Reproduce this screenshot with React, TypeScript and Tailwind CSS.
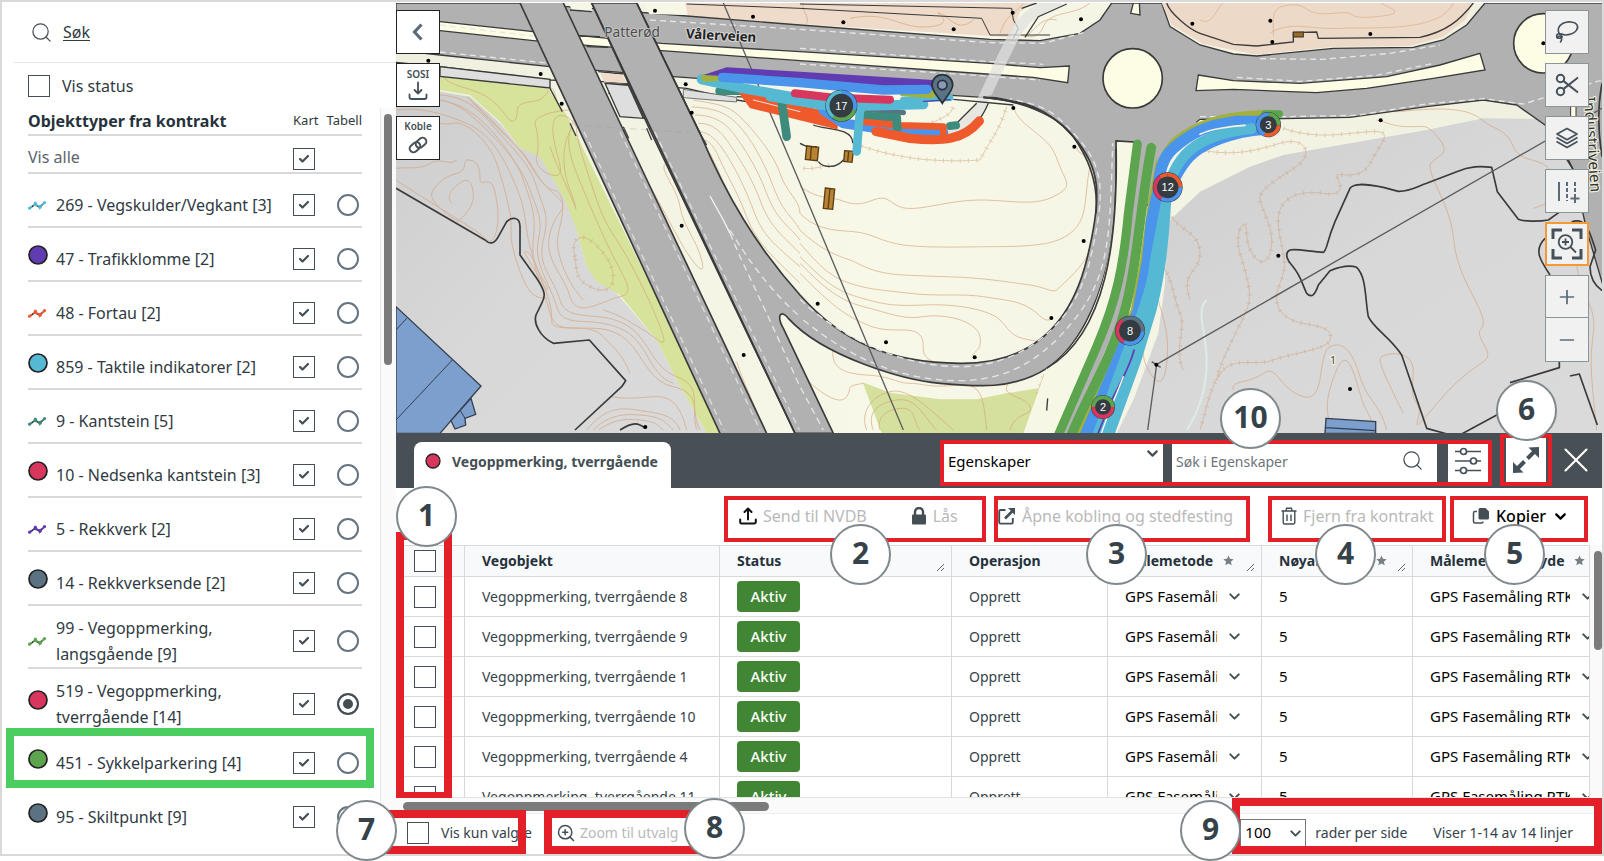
import React from "react";
import { Check, ChevronDown, Plus, Minus, X, Search, ZoomIn } from "lucide-react";

/* ---------- small controls ---------- */

function Tick({ label, checked = false }: { label: string; checked?: boolean }) {
  return (
    <span className="relative flex size-[22px] shrink-0">
      <input
        type="checkbox"
        aria-label={label}
        defaultChecked={checked}
        className="peer size-[22px] appearance-none border border-[#444f55] bg-white"
      />
      <Check
        className="pointer-events-none absolute left-[5px] top-[5px] hidden size-3 text-[#444f55] peer-checked:block"
        strokeWidth={4.4}
      />
    </span>
  );
}

function Badge({ n, className }: { n: number; className: string }) {
  return (
    <span
      className={
        "absolute z-20 flex size-[61px] items-center justify-center rounded-full border-2 border-[#7f888c] bg-white pb-[3px] text-[30px] font-bold leading-none text-[#36424a] " +
        className
      }
    >
      {n}
    </span>
  );
}

/* ---------- sidebar ---------- */

type Item = { name: string; color: string; kind: "dot" | "line"; active?: boolean; marked?: boolean };

const items: Item[] = [
  { name: "269 - Vegskulder/Vegkant [3]", color: "#55b9d3", kind: "line" },
  { name: "47 - Trafikklomme [2]", color: "#613bb2", kind: "dot" },
  { name: "48 - Fortau [2]", color: "#ee5a2c", kind: "line" },
  { name: "859 - Taktile indikatorer [2]", color: "#55b9d3", kind: "dot" },
  { name: "9 - Kantstein [5]", color: "#3d8b7d", kind: "line" },
  { name: "10 - Nedsenka kantstein [3]", color: "#d8365c", kind: "dot" },
  { name: "5 - Rekkverk [2]", color: "#613bb2", kind: "line" },
  { name: "14 - Rekkverksende [2]", color: "#5b7282", kind: "dot" },
  { name: "99 - Vegoppmerking, langsgående [9]", color: "#5da44f", kind: "line" },
  { name: "519 - Vegoppmerking, tverrgående [14]", color: "#d8365c", kind: "dot", active: true },
  { name: "451 - Sykkelparkering [4]", color: "#5da44f", kind: "dot", marked: true },
  { name: "95 - Skiltpunkt [9]", color: "#5b7282", kind: "dot" },
];

function Marker({ item }: { item: Item }) {
  if (item.kind === "dot") {
    return (
      <svg viewBox="0 0 20 20" className="mb-2 size-5" aria-hidden>
        <circle cx="10" cy="10" r="9" fill={item.color} stroke="#222" strokeWidth="1.7" />
      </svg>
    );
  }
  return (
    <svg viewBox="0 0 20 10" className="h-[10px] w-5" aria-hidden>
      <path d="M1.500 8.300 7 4.300 11.600 7.200 16.500 2.800" fill="none" stroke="#222" strokeWidth="1.5" />
      <path d="M1.500 8.300 4 6.500M7 3.500 9 5.500M13.500 5.500 16.500 2.800" fill="none" stroke={item.color} strokeWidth="1.6" />
      <g fill={item.color}>
        <circle cx="1.600" cy="8.200" r="1.600" />
        <path d="M4.800 5.700 6.500 1.500 8.500 2 10 6 7 6.300Z" />
        <path d="M9.500 5.500 13.200 4.600 14 7.500 11.500 9.700Z" />
        <circle cx="16.500" cy="2.600" r="1.600" />
      </g>
    </svg>
  );
}

function Sidebar() {
  return (
    <aside className="flex w-[394px] shrink-0 flex-col bg-white text-base text-[#2f3a42]">
      <a href="#sok" className="ml-3 flex h-[61px] shrink-0 items-center gap-[10px] border-b border-[#e3e4ea] pl-4">
        <Search className="size-[23px] text-[#444f55]" strokeWidth={1.3} />
        <span className="underline underline-offset-2">Søk</span>
      </a>
      <label className="flex h-[45px] shrink-0 items-center gap-3 pl-[26px]">
        <Tick label="Vis status" />
        Vis status
      </label>
      <div className="flex min-h-0 grow">
        <div className="relative grow overflow-hidden pl-[26px] pr-[18px]">
          <div className="flex h-7 items-center border-b-2 border-[#d9d9d9] text-[13px]">
            <h2 className="grow text-base font-bold text-[#26323b]">Objekttyper fra kontrakt</h2>
            <span className="mr-2">Kart</span>
            <span>Tabell</span>
          </div>
          <label className="flex h-[38px] items-center border-b-2 border-[#d9d9d9] pt-[10px]">
            <span className="grow pb-1 text-[#5b656c]">Vis alle</span>
            <span className="mr-[47px]">
              <Tick label="Vis alle i kart" checked />
            </span>
          </label>
          <ul>
            {items.map((item) => (
              <li
                key={item.name}
                className="relative flex min-h-[54px] items-center border-b-2 border-[#d9d9d9] pt-[9px] leading-[26px] last:border-transparent"
              >
                <span className="flex w-7 shrink-0">
                  <Marker item={item} />
                </span>
                <span className="w-[236px] shrink-0 pr-2">
                  <span className="-mr-2 block">{item.name}</span>
                </span>
                <span className="ml-px flex">
                  <Tick label={item.name + " i kart"} checked />
                </span>
                <input
                  type="radio"
                  name="tabell"
                  aria-label={item.name + " i tabell"}
                  defaultChecked={item.active}
                  className="ml-[22px] size-[22px] shrink-0 appearance-none rounded-full border-2 border-[#667380] bg-white checked:border-[#444f55] checked:bg-[#444f55] checked:shadow-[inset_0_0_0_4px_white]"
                />
                {item.marked && (
                  <span className="pointer-events-none absolute -left-[22px] -right-[12px] -top-[4px] h-[60px] border-8 border-[#4bcd5f]" />
                )}
              </li>
            ))}
          </ul>
        </div>
        <div className="w-4 shrink-0 border-l border-[#e8e8e8] bg-[#fafafa] px-[3px] pt-[6px]">
          <div className="h-[251px] w-2 rounded-full bg-[#7b7b7b]" />
        </div>
      </div>
    </aside>
  );
}

/* ---------- map ---------- */

const dots: [number, number][] = [
  [115, 182], [452, 222], [515, 311], [795, 32], [1089, 50], [887, 253], [905, 338], [875, 677], [1061, 1065], [766, 1281],
  [1360, 67], [1691, 88], [1868, 38], [2073, 58], [2407, 71], [1870, 324], [2053, 440], [2081, 723], [1984, 954], [1754, 1072],
  [1488, 1027], [1283, 911], [2641, 62], [2647, 126], [2941, 102], [2972, 361], [2665, 767], [2880, 1167], [3460, 130],
  [2299, 1094],
];

const contours = [
  "M18 305C120 285 200 300 260 350S380 480 400 540 440 640 430 720 460 860 480 940 600 960 680 1000 760 1140 850 1160 900 1240 930 1290",
  "M150 285C230 290 270 330 320 390S420 490 440 560 480 640 460 720 490 830 510 900 620 930 700 970 780 1100 860 1130 900 1210 920 1290",
  "M150 300C210 310 250 350 300 400S400 510 420 570 460 650 445 720 480 850 500 920 600 945 690 985 770 1120 850 1150",
  "M18 330C90 320 160 340 230 370S340 470 370 540 400 620 410 690 440 800 470 880 470 970 500 980 600 970 640 1010 700 1070 720 1120 670 1180",
  "M18 350C80 350 150 380 190 370S300 430 320 490 350 590 360 640 350 700 385 800 440 890 470 895",
  "M240 300C290 350 340 400 380 440S430 530 490 580 500 620 480 700 520 820 540 890 640 900 690 890 700 830 670 770 600 620 560 520 540 400 550 360",
  "M230 290C300 350 350 410 390 450S450 560 490 570 520 640 505 700 540 860 580 900",
  "M185 610C165 590 190 560 215 545S250 560 250 590 220 650 205 665C160 640 120 600 125 580S160 530 200 520 210 475 240 480 270 520 270 540 300 530 310 560 330 650 320 690 300 730 280 710 60 570 18 540",
  "M18 505C60 500 90 510 120 490S180 500 200 480",
  "M160 230C180 260 240 260 290 290S360 380 375 360 370 320 400 310 450 310 470 280 490 270 500 300",
  "M540 330C500 330 430 350 435 370S450 430 440 470 500 540 510 520 480 420 490 370 560 360 560 390 590 510 610 570 640 660 680 720 780 900 810 980 810 1020 760 990 700 950 640 930",
  "M545 385C510 440 520 520 540 570S560 640 555 620 500 500 480 440",
  "M470 870C440 820 410 770 405 760S420 750 440 800 480 860 470 870",
  "M830 490C800 500 860 560 870 620S920 720 935 780 910 790 880 740 800 590 780 560",
  "M1040 1085C1060 1150 1090 1200 1120 1290",
  "M665 1190C720 1200 760 1190 800 1190S870 1210 890 1290M590 1290C640 1230 680 1220 740 1230S850 1240 870 1290M610 1290C650 1250 690 1240 750 1245S820 1260 850 1290M625 1290C670 1260 700 1255 750 1260S800 1275 820 1290",
  "M910 300C960 310 1010 310 1050 350S1150 460 1170 520 1230 600 1230 640",
  "M905 320C960 325 1000 330 1040 370S1120 480 1150 560 1200 640 1230 690",
  "M915 345C960 345 1000 360 1030 400S1100 500 1130 580 1190 670 1230 720",
  "M925 370C960 370 985 385 1010 420S1080 520 1110 600 1170 700 1230 760",
  "M930 395C960 400 975 415 1000 450S1060 550 1090 630 1150 730 1230 800",
  "M945 420C965 430 975 445 990 480S1040 570 1070 650 1140 760 1230 850",
  "M960 460C980 500 1020 590 1050 660S1120 780 1180 830",
  "M1230 560C1290 600 1320 590 1350 600S1400 620 1450 600 1500 620 1550 625 1680 600 1770 600 1930 620 1990 590 2030 550 2010 500 1990 440 1940 400 1880 350 1870 320",
  "M1230 640C1280 690 1330 690 1390 695S1470 725 1540 735 1750 740 1800 740 1940 740 1990 725 2070 680 2080 640 2090 540 2100 500 2060 470 2060 440",
  "M1230 690C1290 750 1350 770 1380 780S1440 820 1540 825 1700 830 1760 835 1880 850 1920 855 1990 880 2000 870 2080 800 2095 760",
  "M1230 730C1290 800 1320 830 1380 850S1480 870 1560 880 1720 880 1780 890 1880 900 1920 925 1960 970 1990 955",
  "M1230 770C1290 830 1330 870 1400 890S1500 920 1600 915 1800 930 1830 960 1860 1010 1920 1020 1930 1030 1950 1035",
  "M1230 790C1290 850 1340 900 1420 920S1540 960 1600 950 1760 960 1770 1010 1730 1060 1755 1072",
  "M1230 820C1290 880 1340 930 1400 960S1480 990 1540 990 1600 1020 1600 1050 1640 1085 1650 1100",
  "M1330 1035C1320 1100 1350 1120 1430 1125S1520 1150 1560 1150 1620 1165 1700 1155 1780 1200 1790 1290M1860 1290C1880 1230 1930 1250 1920 1220S1840 1190 1850 1160 1920 1130 1960 1110",
  "M1230 1120C1290 1180 1350 1220 1370 1190S1360 1160 1420 1150M1430 1290C1410 1240 1440 1190 1500 1175S1630 1240 1690 1290M1450 1290C1430 1240 1460 1210 1520 1200S1600 1250 1640 1290M1470 1290C1460 1260 1480 1230 1530 1225S1570 1270 1590 1290",
  "M2470 310C2600 330 2780 330 3030 335 3240 310 3260 350 3290 370S3350 390 3370 440 3450 470 3480 510",
  "M2960 360C3000 370 3010 380 3060 380S3110 370 3150 420 3120 470 3120 500 3160 590 3180 660 3180 760 3250 890 3240 960 3280 1030 3270 1060 3150 1200 3110 1245 3080 1210 3085 1110 3060 1080 2970 1060 2970 1080 3010 1180 3040 1240 3060 1290",
  "M2530 1170C2520 1140 2580 1150 2620 1120S2670 1170 2740 1190 2780 1060 2820 1040 2890 1060 2910 1130 2970 1210 2990 1290M2830 1290C2800 1240 2810 1180 2840 1110S2890 1110 2910 1180 2940 1230 2950 1290",
  "M2305 900C2320 960 2340 1000 2330 1090S2290 1140 2270 1100 2260 1000 2290 960M3430 625C3450 620 3480 600 3500 620M3560 800C3580 900 3620 920 3610 1000S3600 1100 3620 1290",
  "M1240 9C1230 30 1260 45 1250 70M1380 55C1500 30 1530 90 1620 80S1620 30 1650 40 1700 100 1750 60M1830 100C1850 40 1880 40 1900 9M2000 60C1960 50 1940 80 1910 110M2100 9C2050 50 1980 30 1960 80S1900 100 1900 110",
];

const hachures = [
  "M2300 780C2350 820 2350 900 2370 940S2350 1050 2380 1110M2345 650C2370 690 2430 700 2430 760S2370 810 2400 900",
  "M2430 450C2540 470 2600 450 2670 430S2760 450 2740 480 2600 560 2610 600 2660 700 2640 760 2570 760 2570 700 2530 690 2550 760 2590 880 2570 930 2490 1080 2480 1140",
  "M2680 385C2780 420 2860 400 2940 395S2970 430 2940 490 2830 510 2840 530 2870 590 2800 580 2660 590 2665 670 2700 780 2670 850 2680 960 2740 970 2830 990 2820 1020 2700 1060 2650 1080 2540 1070 2500 1110 2450 1230 2430 1290",
  "M1390 430C1500 470 1620 490 1770 480 1800 420 1830 390 1850 320M1560 400C1600 370 1680 360 1690 320M1240 505C1280 510 1310 490 1330 500",
  "M555 770C540 720 570 700 600 720S670 790 670 830 640 880 600 860 560 820 555 770",
  "M1960 1130C1990 1120 2020 1130 2010 1150S1980 1220 1960 1230 1930 1200 1960 1130",
];

function Ring({ x, y, r, n, parts }: { x: number; y: number; r: number; n: string; parts: [string, number, number][] }) {
  const mid = r - 7;
  const round = 2 * Math.PI * mid;
  return (
    <g transform={`translate(${x} ${y})`}>
      <circle r={r} fill="#34404a" />
      {parts.map(([color, start, share]) => (
        <circle
          key={start}
          r={mid}
          fill="none"
          stroke={color}
          strokeWidth="11"
          strokeDasharray={`${round * share} ${round}`}
          transform={`rotate(${start * 360 - 90})`}
        />
      ))}
      <circle r={r - 14} fill="#343c41" />
      <text y="12" textAnchor="middle" fontSize="33" fill="#fff" fontFamily="'Liberation Sans', sans-serif">
        {n}
      </text>
    </g>
  );
}

function MapView() {
  return (
    <svg
      viewBox="18 9 3618 1290"
      preserveAspectRatio="xMinYMin slice"
      className="absolute inset-0 h-full w-full"
      fontFamily="'Noto Sans', sans-serif"
      role="img"
      aria-label="Kart"
    >
      <defs>
        <linearGradient id="ground" x1="0" y1="0" x2="1" y2="1">
          <stop offset="0" stopColor="#cdcdcd" />
          <stop offset=".5" stopColor="#d8d8d8" />
          <stop offset="1" stopColor="#dadada" />
        </linearGradient>
        <linearGradient id="field" x1="0" y1="0" x2="1" y2="0">
          <stop offset="0" stopColor="#efefdf" />
          <stop offset=".4" stopColor="#f8f8e8" />
          <stop offset="1" stopColor="#efefdf" />
        </linearGradient>
      </defs>
      <rect x="18" y="9" width="3618" height="1290" fill="url(#field)" />

      {/* ground cover */}
      <path d="M18 250 150 275 240 290 330 370 390 445 450 465 530 600 560 690 590 800 680 880 800 1020 860 1140 950 1300H18Z" fill="url(#ground)" />
      <path d="M150 228 470 262 530 345 1000 1300H950L860 1140 800 1020 690 885 620 845 590 800 560 690 520 590 450 470 390 445 330 365 240 285 150 270Z" fill="#d7e39b" />
      <path d="M2330 670 2430 575 2580 500 2680 465 2880 430 3110 390 3280 355 3440 357 3636 400V1300H2180L2230 1200 2305 1000 2325 850Z" fill="url(#ground)" />
      <path d="M1418 1147 1500 1178 1650 1198 1760 1198 1850 1180 1945 1165 1925 1300H1475Z" fill="#d5e09d" />
      <path d="M880 9H1930L1890 35 1860 112 1800 108 1230 72 890 48Z" fill="#eedbc9" />

      {/* contour lines */}
      <g fill="none" stroke="#d4a078" strokeWidth="3" opacity=".62">
        {contours.map((d) => (
          <path key={d} d={d} />
        ))}
      </g>
      <g fill="none" stroke="#cfa07a" opacity=".5">
        {hachures.map((d) => (
          <g key={d}>
            <path d={d} strokeWidth="3" />
            <path d={d} strokeWidth="13" strokeDasharray="3 22" />
          </g>
        ))}
      </g>
      <path d="M2450 900C2415 930 2450 1000 2450 1080S2430 1230 2390 1290" fill="none" stroke="#dcebea" strokeWidth="6" />

      {/* east-west road */}
      <g stroke="#3a3a3a" strokeWidth="4">
        <path d="M18 9H390L600 25 890 48 1230 75 1800 118 1950 122 2070 100 2130 60 2165 9H2315L2340 80 2430 135 2530 162 2600 168 2830 145 3070 142 3160 120 3230 75 3285 9H3640V860L3590 690 3550 510 3465 375 3380 315 3280 300 3110 320 2880 352 2680 356 2430 358 2330 440 2280 620 2180 560 2180 425 2050 360 1870 305 1780 292 1300 262 850 230 480 200 150 165 18 150Z" fill="#b1b1b1" />
        <path d="M18 60 150 65 430 95 600 110 815 130 1230 155 1800 190 1950 203 2038 198 2033 248 1930 232 1230 182 815 152 600 137 430 122 150 92 18 80Z" fill="#fdfde6" />
        <path d="M2425 225 2530 242 2730 250 2990 230 3150 195 3270 160 3285 210 3130 235 2930 265 2780 278 2530 268 2418 272Z" fill="#fdfde6" />
        <path d="M2230 9 2222 40 2250 45 2248 9Z" fill="#fdfde6" />
        <path d="M18 187 150 200 480 240 640 245 890 265 1040 300 1230 330 1230 300 1040 290" fill="none" />
        <path d="M150 200 480 238V264L150 229Z" fill="#dedede" />
        <path d="M880 268 1040 292 1040 306 880 293Z" fill="#dedede" strokeWidth="2" />
      </g>
      <path d="M2315 9 2345 75 2440 132 2600 164 2830 140 3060 138 3160 110 3225 60 3250 9Z" fill="#ecd9c8" />
      <path
        d="M2430 60C2470 80 2480 20 2500 9M2640 100C2700 60 2760 90 2850 85S3150 100 3190 9M2650 110C2650 50 2640 20 2700 15S2740 50 2830 40 2850 60 2960 50 2980 20 2975 9"
        fill="none"
        stroke="#d4a078"
        strokeWidth="3"
        opacity=".5"
      />
      <g fill="none" stroke="#3a3a3a" strokeWidth="4">
        <path d="M2330 9C2340 40 2400 90 2430 100L2530 133 2600 138 2710 126 2710 98 2780 96 2785 115 3090 112C3170 95 3210 60 3250 9" />
        <path d="M890 12 1230 25 1775 55 1800 105 1980 105M1230 12 1865 25 1870 60 1885 85 1870 115" strokeWidth="3" />
      </g>
      <rect x="2710" y="96" width="30" height="15" fill="#9b6b26" stroke="#333" strokeWidth="3" />
      <g fill="none" stroke="#e6e6e6" strokeWidth="4" strokeDasharray="18 12">
        <path d="M150 75 430 108M150 156 480 190M780 60 1230 88 1800 128 1960 130 2080 98" />
        <path d="M1230 145 1800 185 1960 193M1230 192 1700 222 1950 240M2610 176 2800 178 3000 160 3150 135M2430 350 2680 350 2900 346 3110 312 3280 296 3400 312 3636 240" />
        <path d="M2540 232 2730 244 2960 226 3130 190" />
      </g>

      {/* footpath crossing the road */}
      <path d="M2010 0C1900 40 1890 70 1840 170L1770 320C1740 370 1700 400 1650 400" fill="none" stroke="#e1e1e1" strokeWidth="34" opacity=".72" />
      <path d="M2030 12 1945 50 1905 112M1895 25 1940 9M1795 310C1770 370 1740 390 1700 400M1760 310 1700 370M1690 298 1870 315" fill="none" stroke="#3a3a3a" strokeWidth="4" />

      {/* ramp and loop */}
      <path d="M740 9 930 400C1010 590 1100 740 1230 885S1500 1088 1710 1090 2040 980 2090 780 2130 500 2050 410 1900 300 1780 292L2180 300V425H2178C2180 600 2175 700 2150 800S2070 1040 1970 1105 1760 1160 1650 1150 1300 1070 1195 955C1170 925 1160 950 1180 985L1330 1300H1215L605 9Z" fill="#b1b1b1" stroke="#3a3a3a" strokeWidth="5" />
      <path d="M1790 286 2190 286 2400 300 2420 370 2320 460 2270 600 2200 424 2140 480 1960 318Z" fill="#b1b1b1" />
      <path d="M1780 292C1880 300 2000 340 2050 410S2125 560 2118 640" fill="none" stroke="#3a3a3a" strokeWidth="5" />
      <path d="M2178 423 2250 430C2220 640 2200 860 2110 1080L2050 1240 2000 1300H1900L1970 1105C2120 1010 2190 760 2178 423Z" fill="#f7f7e6" />
      <path d="M1970 1105C2150 1000 2185 720 2178 423L2235 426" fill="none" stroke="#3a3a3a" strokeWidth="5" />
      <path d="M390 9 990 1300H1130L700 390 520 9Z" fill="#b1b1b1" />
      <path d="M540 30 605 35M570 108 630 110M590 140 655 142M625 215 700 222M650 250 715 255M655 280 720 285" stroke="#3a3a3a" strokeWidth="4" />
      <path d="M630 218 698 224 710 250 642 245Z" fill="#eedbc9" />
      <path d="M645 250 715 256 760 355 690 350Z" fill="#dedede" stroke="#3a3a3a" strokeWidth="4" />
      <path d="M535 9H600L608 32 545 28Z" fill="#f7f7e6" />
      <path d="M762 9H885L893 45 778 42Z" fill="#f7f7e6" />
      <g fill="none" stroke="#3a3a3a" strokeWidth="5">
        <path d="M390 9 570 395 990 1300M520 9 700 390 1130 1300M605 9 780 390 1215 1300M740 9 930 400" />
        <path d="M480 265 517 335M540 370 558 408M700 380 716 415M770 385 785 420M930 400 950 435" strokeWidth="4" />
      </g>
      <g fill="none" stroke="#e6e6e6" strokeWidth="4" strokeDasharray="20 14">
        <path d="M582 395 1002 1290M690 395 1110 1290M794 395 1228 1290" opacity=".85" />
        <path d="M1020 700 1050 770 1130 940 1230 1160 1300 1290M1020 690C1080 790 1150 880 1230 950" />
        <path d="M1230 898C1360 1020 1540 1100 1710 1100S2050 990 2100 780 2140 500 2060 410 1960 320 1860 296" />
        <path d="M1240 960C1400 1090 1550 1140 1700 1142S1960 1080 2060 950 2160 700 2168 430" />
        <path d="M550 375 900 398" stroke="#999" strokeWidth="2" opacity=".5" />
      </g>
      <path d="M960 588 1000 660 1020 700" fill="none" stroke="#f3f3f3" strokeWidth="4" />

      {/* roundabouts */}
      <circle cx="2228" cy="235" r="89" fill="#fdfde6" stroke="#3a3a3a" strokeWidth="5" />
      <circle cx="3460" cy="130" r="89" fill="#fdfde6" stroke="#3a3a3a" strokeWidth="5" />
      <path d="M3542 315H3558V350H3542Z" fill="#fdfde6" stroke="#3a3a3a" strokeWidth="3" />

      {/* property borders */}
      <g fill="none" stroke="#3a3a3a" strokeWidth="5" strokeLinejoin="round">
        <path d="M18 565 285 720C300 735 315 730 325 710L350 665C365 650 390 650 390 680V765L440 835C470 880 465 890 455 910L438 945C430 970 450 1010 490 1030L598 1020 707 1142 695 1160 555 1290M690 1290C730 1265 745 1268 765 1285" />
        <path d="M2700 750C2720 745 2770 757 2800 757 2812 750 2808 730 2835 665L2880 565C2890 550 2920 550 2980 562L3025 574C3060 575 3080 560 3110 550L3200 515C3240 498 3270 498 3305 502L3322 575 3385 658C3400 665 3450 665 3475 660L3510 635" />
        <path d="M2700 750C2680 760 2695 785 2705 795 2735 830 2735 850 2750 880 2765 895 2775 885 2785 855L2820 812C2850 800 2880 795 2900 802 2930 830 2925 900 2935 950 2950 985 3000 1010 3035 1065L3110 1285 3200 1310 3330 1240" />
        <path d="M3545 665C3590 650 3600 700 3617 750L3600 800C3600 840 3620 860 3636 872M3465 715C3430 750 3450 780 3480 825M3535 480 3550 510M3636 250C3620 330 3625 400 3636 470M3360 1148 3508 1103V1085M3540 1128 3568 1122 3622 1275" />
        <path d="M1230 430C1250 440 1250 440 1280 440M1270 375C1300 390 1390 380 1388 430M1285 485C1300 505 1340 505 1360 480M1973 1195 1970 1232" strokeWidth="4" />
      </g>
      <path d="M1000 9 1230 550 1540 1290M3636 325 2430 1018 2300 1093 2273 1290M2285 1085 2312 1102" fill="none" stroke="#5c5c5c" strokeWidth="4" />

      {/* buildings */}
      <g fill="#7d9fce" stroke="#34404f" strokeWidth="4">
        <path d="M18 920 273 1158 150 1300H18Z" />
        <path d="M243 1195 257 1243 225 1255 227 1275 195 1287 183 1262Z" />
        <path d="M50 955 18 990M187 1080 18 1260M210 1230 225 1255" fill="none" strokeWidth="3" />
        <path d="M2808 1255 2957 1265V1300H2805ZM2808 1283 2957 1292" />
      </g>
      <g fill="#b88434" stroke="#5c3d12" strokeWidth="4">
        <path d="M1250 438 1286 442 1282 482 1246 478ZM1264 440 1261 480" />
        <path d="M1364 452 1390 454 1386 487 1361 484ZM1376 453 1373 486" />
        <path d="M1306 564 1334 567 1328 628 1300 625ZM1320 565 1314 627" />
      </g>

      {dots.map(([x, y]) => (
        <circle key={`${x}-${y}`} cx={x} cy={y} r="6" fill="#000" />
      ))}

      {/* registered objects, lay-by */}
      <g fill="none" strokeLinecap="round" strokeLinejoin="round">
        <path d="M988 273H1060L1160 295" stroke="#3d8b7d" strokeWidth="24" />
        <path d="M1045 272 1082 322 1230 358 1340 385 1340 345 1230 318 1140 285Z" fill="#ee5a2c" stroke="#ee5a2c" strokeWidth="6" />
        <path d="M1090 300 1230 335" stroke="#f4e2da" strokeWidth="3" />
        <path d="M1175 305 1190 410" stroke="#3d8b7d" strokeWidth="26" />
        <path d="M1300 330 1360 370 1500 390 1660 398" stroke="#4b94eb" strokeWidth="30" />
        <path d="M1230 310 1540 338" stroke="#5b7282" strokeWidth="16" />
        <path d="M1420 348 1520 352 1522 382" stroke="#3d8b7d" strokeWidth="26" />
        <path d="M1680 378 1698 376" stroke="#3d8b7d" strokeWidth="24" />
        <path d="M1425 366 1530 376 1660 380 1660 398" stroke="#ee5a2c" strokeWidth="20" />
        <path d="M1520 370 1522 384" stroke="#3d8b7d" strokeWidth="26" />
        <path d="M1458 394 1560 415C1660 425 1720 420 1768 363" stroke="#ee5a2c" strokeWidth="28" />
        <path d="M935 238 1060 265 1230 295 1400 318 1600 313" stroke="#55b9d3" strokeWidth="30" />
        <path d="M1140 292 1300 318 1500 318" stroke="#55b9d3" strokeWidth="24" />
        <path d="M1410 330 1400 454" stroke="#55b9d3" strokeWidth="26" />
        <path d="M1540 300 1680 293" stroke="#55b9d3" strokeWidth="20" />
        <path d="M1600 304 1680 299" stroke="#613bb2" strokeWidth="4" />
        <path d="M945 234 1020 230M1540 278 1625 284" stroke="#a3b13a" strokeWidth="22" />
      </g>
      <path d="M940 225 1010 202 1230 215 1630 240V270L1400 262 1000 228Z" fill="#613bb2" />
      <g fill="none" strokeLinecap="round">
        <path d="M997 232 1230 248 1480 270 1612 268" stroke="#4b94eb" strokeWidth="28" />
        <path d="M1215 280 1330 293 1500 299" stroke="#d8365c" strokeWidth="24" />
      </g>

      {/* registered objects, eastern road */}
      <path d="M2300 470 2275 600 2250 780 2222 930 2155 1080 2060 1300H2100L2200 1080 2250 930 2290 780 2310 600Z" fill="#a3b13a" />
      <g fill="none" strokeLinecap="round" strokeLinejoin="round">
        <path d="M2262 435C2230 620 2220 820 2150 1000L2015 1310" stroke="#b1b1b1" strokeWidth="34" />
        <path d="M2242 432 2215 640C2200 800 2180 900 2120 1040L2003 1310" stroke="#5da44f" strokeWidth="27" />
        <path d="M2284 443C2250 620 2242 800 2202 940S2090 1190 2042 1310" stroke="#5da44f" strokeWidth="29" />
        <path d="M2645 340C2550 342 2480 352 2420 382S2335 435 2312 490" stroke="#a3b13a" strokeWidth="22" />
        <path d="M2625 342 2668 342" stroke="#5da44f" strokeWidth="22" />
        <path d="M2618 364 2540 364C2450 375 2400 400 2350 445S2310 550 2300 610" stroke="#4b94eb" strokeWidth="34" />
        <path d="M2625 388C2520 395 2440 435 2410 460S2350 540 2330 590" stroke="#4b94eb" strokeWidth="32" />
        <path d="M2585 386C2490 395 2420 425 2385 465S2330 560 2326 610" stroke="#55b9d3" strokeWidth="32" />
        <path d="M2430 403C2460 388 2520 378 2565 376" stroke="#f3f3e4" strokeWidth="5" />
      </g>
      <path d="M2300 540 2346 560C2342 640 2336 720 2328 780S2312 880 2300 930L2253 1085C2230 1150 2200 1230 2175 1300H2095L2180 1080 2235 930 2265 780Z" fill="#55b9d3" />
      <path d="M2285 580 2318 580C2305 650 2290 720 2278 790 2275 840 2250 910 2240 940L2185 1085 2108 1300H2070L2165 1080 2228 930 2256 780 2268 660Z" fill="#4b94eb" />
      <g fill="none" strokeLinecap="round">
        <path d="M2232 1050C2220 1100 2190 1150 2165 1200L2124 1300" stroke="#613bb2" strokeWidth="5" />
        <path d="M2200 1130C2180 1180 2155 1240 2134 1300" stroke="#fff" strokeWidth="4" />
      </g>

      <path d="M1657 310C1640 285 1626 272 1626 255A31 31 0 0 1 1688 255C1688 272 1672 285 1657 310Z" fill="#5b7282" stroke="#26323b" strokeWidth="5" />
      <circle cx="1657" cy="255" r="14" fill="#8b98b5" stroke="#26323b" strokeWidth="5" />

      <Ring x={1354} y={317} r={48} n="17" parts={[["#4b94eb", 0, 0.3], ["#5da44f", 0.3, 0.3], ["#55b9d3", 0.6, 0.4]]} />
      <Ring x={2333} y={562} r={45} n="12" parts={[["#ee5a2c", 0.9, 0.1], ["#ee5a2c", 0, 0.25], ["#4b94eb", 0.25, 0.33], ["#d8365c", 0.58, 0.32]]} />
      <Ring x={2220} y={992} r={45} n="8" parts={[["#5b7282", 0.9, 0.1], ["#5b7282", 0, 0.26], ["#4b94eb", 0.26, 0.32], ["#d8365c", 0.58, 0.32]]} />
      <Ring x={2139} y={1221} r={36} n="2" parts={[["#5da44f", 0.75, 0.25], ["#5da44f", 0, 0.25], ["#d8365c", 0.25, 0.5]]} />
      <Ring x={2635} y={374} r={38} n="3" parts={[["#5da44f", 0, 0.26], ["#ee5a2c", 0.26, 0.3], ["#4b94eb", 0.56, 0.44]]} />

      {/* place names */}
      <g paintOrder="stroke" strokeLinejoin="round">
        <text x="643" y="112" fontSize="41" fill="#4c4c4c" stroke="#c9c9c9" strokeWidth="5">
          Patterød
        </text>
        <text transform="translate(887 115) rotate(3)" fontSize="40" fontWeight="700" fill="#222" stroke="#d8d8d8" strokeWidth="6">
          Vålerveien
        </text>
        <text transform="translate(3582 292) rotate(86)" fontSize="46" fill="#333" stroke="#eeeedd" strokeWidth="7">
          Industriveien
        </text>
        <text x="2820" y="1092" fontSize="32" fill="#444" stroke="#f3f3dd" strokeWidth="7">
          1
        </text>
      </g>
    </svg>
  );
}

const ink = "#44505a";

function MapTools() {
  const box = "flex size-11 flex-col items-center justify-center";
  const left = box + " border border-[#222] bg-white text-[10px] font-semibold leading-none text-[#444f55]";
  const right = box + " border border-[#8a9499] bg-[#f1f1f1]";
  return (
    <div className="absolute inset-0 flex items-start justify-between py-[7px] pr-[13px]">
      <div className="flex flex-col gap-[9px]">
        <button type="button" aria-label="Skjul panel" className={left}>
          <svg viewBox="0 0 24 24" className="size-6" fill="none" stroke="#5b6b7b" strokeWidth="3.2">
            <path d="M15.500 4.500 8.500 12l7 7.500" />
          </svg>
        </button>
        <button type="button" className={left}>
          SOSI
          <svg viewBox="0 0 20 20" className="mt-0.5 size-5" fill="none" stroke={ink} strokeWidth="1.8" strokeLinecap="round" strokeLinejoin="round">
            <path d="M10 1.500v11M6.500 9 10 12.500 13.500 9M1.500 13.500v2.500a2 2 0 0 0 2 2h13a2 2 0 0 0 2-2V13.500" />
          </svg>
        </button>
        <button type="button" className={left}>
          Koble
          <svg viewBox="0 0 20 20" className="mt-1 size-5" fill="none" stroke={ink} strokeWidth="2">
            <g transform="rotate(-40 10 10)">
              <rect x="0.500" y="6" width="11.500" height="7.500" rx="3.700" />
              <rect x="8" y="6.500" width="11.500" height="7.500" rx="3.700" />
            </g>
          </svg>
        </button>
      </div>
      <div className="flex flex-col gap-[9px]">
        <button type="button" aria-label="Lasso" className={right}>
          <svg viewBox="0 0 26 26" className="size-[26px]" fill="none" stroke={ink} strokeWidth="1.6" strokeLinecap="round">
            <path d="M5.500 15C3 11.500 4 7 9 4.300c5-2.400 12-1.700 14 1.500 2 3.500-1 7.700-6 9.300-4 1.200-8 .8-10-.3" />
            <circle cx="5" cy="17" r="2.300" />
            <path d="M2.800 18.500c2-1.800 4.500-2 5.500-.500M7 18.500c1 1.500.8 3-.5 4.500" />
          </svg>
        </button>
        <button type="button" aria-label="Klipp" className={right}>
          <svg viewBox="0 0 26 26" className="size-[26px]" fill="none" stroke={ink} strokeWidth="2">
            <circle cx="6.500" cy="6.500" r="3.700" />
            <circle cx="6.500" cy="19.500" r="3.700" />
            <path d="M9.300 8.900 24 20.500M9.300 17.100 24 5.500" />
          </svg>
        </button>
        <button type="button" aria-label="Kartlag" className={right}>
          <svg viewBox="0 0 26 26" className="size-[26px]" fill="none" stroke={ink} strokeWidth="1.7" strokeLinejoin="round">
            <path d="M13 3.500 23 9l-10 5.700L3 9Z" />
            <path d="m2.500 12.500 10.500 6 10.500-6M2.500 16.500l10.500 6 10.500-6" />
          </svg>
        </button>
        <button type="button" aria-label="Legg til vei" className={right}>
          <svg viewBox="0 0 26 26" className="size-[26px]" fill="none" stroke="#5b6b7b" strokeWidth="2">
            <path d="M5 4v19" />
            <path d="M13 4v19M21 4v11" strokeDasharray="4 2" />
            <path d="M16.500 20.500h9M21 16v9" />
          </svg>
        </button>
        <button type="button" aria-label="Zoom til objekt" className="flex size-11 items-center justify-center border-2 border-[#f39a36] bg-[#f1f1f1]">
          <svg viewBox="0 0 34 34" className="size-[34px] shrink-0" fill="none" stroke={ink}>
            <path d="M3 12V3h9M22 3h9v9M31 22v9h-9M12 31H3v-9" strokeWidth="3" />
            <circle cx="15.500" cy="15" r="6.800" strokeWidth="1.8" />
            <path d="m20.500 20 5.500 5.500M15.500 11.500v7M12 15h7" strokeWidth="1.8" />
          </svg>
        </button>
        <div className="flex flex-col border border-[#8a9499] bg-[#f1f1f1]">
          <button type="button" aria-label="Zoom inn" className="flex h-[42px] w-[42px] items-center justify-center border-b border-[#8a9499]">
            <Plus className="size-[22px] text-[#5b6b7b]" strokeWidth={1.9} />
          </button>
          <button type="button" aria-label="Zoom ut" className="flex h-[43px] w-[42px] items-center justify-center">
            <Minus className="size-[22px] text-[#5b6b7b]" strokeWidth={1.9} />
          </button>
        </div>
      </div>
    </div>
  );
}

/* ---------- object panel ---------- */

function PanelBar() {
  return (
    <div className="flex h-[55px] shrink-0 items-start justify-between bg-[#484f55] pl-[18px]">
      <div className="mt-[9px] flex h-[46px] w-[257px] items-center rounded-t-lg bg-white pb-2 pl-[11px] text-[14px] font-bold text-[#444f55]">
        <svg viewBox="0 0 16 16" className="mr-[11px] size-4" aria-hidden>
          <circle cx="8" cy="8" r="7" fill="#d8365c" stroke="#222" strokeWidth="1.3" />
        </svg>
        <span className="whitespace-nowrap">Vegoppmerking, tverrgående</span>
      </div>
      <div className="mt-[7px] flex">
        <div className="relative flex h-[46px] border-4 border-[#e32027]">
          <span className="relative flex w-[219px]">
            <select aria-label="Søkefelt" className="w-full appearance-none bg-white pb-1 pl-1 text-[15px] text-black">
              <option>Egenskaper</option>
            </select>
            <ChevronDown className="pointer-events-none absolute right-[2px] top-px size-[17px] text-[#444f55]" strokeWidth={3} />
          </span>
          <span className="relative ml-[9px] flex w-[265px]">
            <input
              type="search"
              aria-label="Søk i Egenskaper"
              placeholder="Søk i Egenskaper"
              className="w-full bg-white pb-1 pl-1 text-[14px] placeholder:text-[#6d757a]"
            />
            <Search className="absolute right-[13px] top-[5px] size-[23px] text-[#444f55]" strokeWidth={1.3} />
          </span>
          <button type="button" aria-label="Filter" className="ml-[11px] flex w-10 items-center justify-center bg-white pb-1">
            <svg viewBox="0 0 28 28" className="size-7" fill="none" stroke={ink} strokeWidth="1.7">
              <path d="M1 4.500h5.500M12.500 4.500H27M1 14h15.500M22.500 14H27M1 23.500h5.500M12.500 23.500H27" />
              <circle cx="9.500" cy="4.500" r="3" />
              <circle cx="19.500" cy="14" r="3" />
              <circle cx="9.500" cy="23.500" r="3" />
            </svg>
          </button>
          <Badge n={10} className="-top-[56px] left-[276px]" />
        </div>
        <div className="relative -mt-[6px] ml-2 flex h-[52px] w-[52px] border-4 border-[#e32027]">
          <button type="button" aria-label="Utvid tabell" className="flex grow items-center justify-center border-x-2 border-[#484f55] bg-white">
            <svg viewBox="0 0 30 30" className="size-[30px] shrink-0" stroke={ink} fill={ink}>
              <path d="m16.500 13.500 8-8M13.500 16.500l-8 8" strokeWidth="4" fill="none" />
              <path d="M28 2v11L17.500 2.500ZM2 28V17l10.500 10.500Z" stroke="none" />
            </svg>
          </button>
          <Badge n={6} className="-top-[58px] -left-[8px]" />
        </div>
        <button type="button" aria-label="Lukk" className="ml-[3px] mr-[5px] flex h-11 w-[42px] items-center justify-center pb-1">
          <X className="size-[42px]" color="#fff" strokeWidth={1.2} />
        </button>
      </div>
    </div>
  );
}

function Toolbar() {
  const group = "relative flex h-[46px] items-center border-4 border-[#e32027] pb-[6px]";
  const action = "flex items-center gap-[6px] whitespace-nowrap";
  return (
    <div className="flex h-[57px] shrink-0 justify-end pr-[14px] pt-2 text-base text-[#b9b9b9]">
      <div className={group + " w-[262px] pl-[11px]"}>
        <button type="button" disabled className={action}>
          <svg viewBox="0 0 18 18" className="size-[18px]" fill="none" stroke="#111" strokeWidth="2" strokeLinecap="round" strokeLinejoin="round">
            <path d="M9 12.500V1.500M5.500 5 9 1.500 12.500 5M1.200 12.500v2.500a1.500 1.500 0 0 0 1.500 1.500h12.600a1.500 1.500 0 0 0 1.500-1.500v-2.500" />
          </svg>
          Send til NVDB
        </button>
        <button type="button" disabled className={action + " ml-11"}>
          <svg viewBox="0 0 16 18" className="h-[18px] w-4">
            <path d="M4 8V5a4 4 0 0 1 8 0v3" fill="none" stroke="#444f55" strokeWidth="2.4" />
            <rect x="1" y="7.500" width="14" height="10" rx="1" fill="#444f55" />
          </svg>
          Lås
        </button>
        <Badge n={2} className="left-[102px] top-6" />
      </div>
      <div className={group + " ml-2 w-[256px]"}>
        <button type="button" disabled className={action}>
          <svg viewBox="0 0 18 18" className="size-[18px]" fill="none" stroke="#444f55" strokeWidth="1.9">
            <path d="M7.500 3H2.500A1.300 1.300 0 0 0 1.200 4.300v11a1.300 1.300 0 0 0 1.300 1.300h11a1.300 1.300 0 0 0 1.300-1.300V11" />
            <path d="m7 11.500 8-8" strokeWidth="2.6" />
            <path d="M10 1h7v7Z" fill="#444f55" stroke="none" />
          </svg>
          Åpne kobling og stedfesting
        </button>
        <Badge n={3} className="left-[88px] top-6" />
      </div>
      <div className={group + " ml-[18px] w-[178px] pl-[9px]"}>
        <button type="button" disabled className={action}>
          <svg viewBox="0 0 16 18" className="h-[18px] w-4" fill="none" stroke="#444f55" strokeWidth="1.4">
            <path d="M.5 4h15M5 4l.5-2.800h5L11 4M2.200 4v11.500a1.500 1.500 0 0 0 1.500 1.500h8.600a1.500 1.500 0 0 0 1.500-1.500V4M6 7.500v6.500M10 7.500v6.500" />
          </svg>
          Fjern fra kontrakt
        </button>
        <Badge n={4} className="left-[43px] top-6" />
      </div>
      <div className={group + " ml-1 w-[138px] pl-[18px]"}>
        <button type="button" className={action + " font-medium text-black"}>
          <svg viewBox="0 0 18 18" className="size-[18px]">
            <path d="M5 4.500H3A1.500 1.500 0 0 0 1.500 6v8.500A1.500 1.500 0 0 0 3 16h6.500a1.500 1.500 0 0 0 1.500-1.500" fill="none" stroke="#444f55" strokeWidth="1.5" />
            <path d="M8 1h5.500l3.500 3.500V11a1.500 1.500 0 0 1-1.500 1.500H8A1.500 1.500 0 0 1 6.500 11V2.500A1.500 1.500 0 0 1 8 1Z" fill="#444f55" />
          </svg>
          Kopier
          <ChevronDown className="size-[17px]" strokeWidth={3.2} />
        </button>
        <Badge n={5} className="left-[30px] top-6" />
      </div>
    </div>
  );
}

function Star() {
  return (
    <svg viewBox="0 0 12 12" className="ml-[10px] size-[11px] shrink-0" fill="#7a7f84" aria-hidden>
      <path d="m6 .5 1.600 3.700 4 .4-3 2.700.9 4L6 9.200l-3.500 2.100.9-4-3-2.700 4-.4Z" />
    </svg>
  );
}

function Grip() {
  return (
    <svg viewBox="0 0 9 9" className="absolute bottom-1 right-[6px] size-[9px]" fill="none" stroke="#666" strokeWidth="1" aria-hidden>
      <path d="M1 8 8 1M5 8l3-3" />
    </svg>
  );
}

const columns = [
  { name: "Vegobjekt", star: false, grip: false },
  { name: "Status", star: false, grip: true },
  { name: "Operasjon", star: false, grip: false },
  { name: "Målemetode", star: true, grip: true },
  { name: "Nøyaktighet", star: true, grip: true },
  { name: "Målemetode høyde", star: true, grip: false },
];

const rows = [8, 9, 1, 10, 4, 11];

function Method({ label, wide = false }: { label: string; wide?: boolean }) {
  return (
    <span className="flex items-center">
      <select
        aria-label={label}
        className={
          "shrink-0 appearance-none overflow-hidden bg-transparent text-[15px] text-black " + (wide ? "w-[140px]" : "w-[92px]")
        }
      >
        <option>GPS Fasemåling RTK</option>
      </select>
      <ChevronDown className="pointer-events-none ml-[9px] size-[17px] shrink-0 text-[#444f55]" strokeWidth={2.8} />
    </span>
  );
}

function DataTable() {
  const cell = "overflow-hidden border-b border-r border-[#d9d9d9] pl-[17px] whitespace-nowrap";
  return (
    <div className="relative flex min-h-0 grow">
      <div className="min-w-0 grow overflow-hidden border-b border-[#e3e3e3]">
        <table className="w-full table-fixed border-separate border-spacing-0 text-[15px] text-[#36424a]">
          <colgroup>
            <col className="w-[69px]" />
            <col className="w-[255px]" />
            <col className="w-[232px]" />
            <col className="w-[156px]" />
            <col className="w-[154px]" />
            <col className="w-[151px]" />
            <col />
          </colgroup>
          <thead>
            <tr className="h-8 bg-[#f8f9fb] text-left text-[#26323b]">
              <th className="border-b border-r border-t border-[#d9d9d9] pl-[18px]">
                <Tick label="Velg alle" />
              </th>
              {columns.map((c) => (
                <th key={c.name} className="relative overflow-hidden border-b border-r border-t border-[#d9d9d9] pb-px pl-[17px] text-[14px] font-bold">
                  <span className="flex items-center whitespace-nowrap">
                    {c.name}
                    {c.star && <Star />}
                  </span>
                  {c.grip && <Grip />}
                </th>
              ))}
            </tr>
          </thead>
          <tbody>
            {rows.map((n) => (
              <tr key={n} className="h-10">
                <td className="border-b border-r border-[#d9d9d9] pl-[18px]">
                  <Tick label={"Velg rad " + n} />
                </td>
                <td className={cell + " text-[14px]"}>Vegoppmerking, tverrgående {n}</td>
                <td className={cell}>
                  <span className="inline-flex h-[31px] w-[63px] items-center justify-center rounded bg-[#418634] font-medium text-white">
                    Aktiv
                  </span>
                </td>
                <td className={cell + " text-[14px]"}>Opprett</td>
                <td className={cell}>
                  <Method label={"Målemetode rad " + n} />
                </td>
                <td className={cell + " text-black"}>5</td>
                <td className={cell}>
                  <Method label={"Målemetode høyde rad " + n} wide />
                </td>
              </tr>
            ))}
          </tbody>
        </table>
      </div>
      <div className="w-3 shrink-0 bg-[#fafafa] pl-1 pt-[6px]">
        <div className="h-[99px] rounded-full bg-[#7b7b7b]" />
      </div>
      <span className="pointer-events-none absolute -bottom-[2px] -top-[13px] left-0 w-14 border-8 border-[#e32027]" />
      <Badge n={1} className="-top-[59px] left-0" />
    </div>
  );
}

function Footer() {
  return (
    <div className="relative shrink-0">
      <div className="h-4 border-b border-[#eee] bg-[#fafafa] pl-[7px] pt-1">
        <div className="h-[9px] w-[366px] rounded-full bg-[#7b7b7b]" />
      </div>
      <div className="flex h-10 items-center pb-[3px] pl-[11px] pr-[29px] text-[14px] text-[#36424a]">
        <label className="flex items-center gap-3 whitespace-nowrap">
          <Tick label="Vis kun valgte" />
          Vis kun valgte
        </label>
        <button type="button" disabled className="ml-6 flex items-center gap-1 whitespace-nowrap text-[#b9b9b9]">
          <ZoomIn className="size-5 text-[#444f55]" strokeWidth={1.8} />
          Zoom til utvalg
        </button>
        <span className="relative ml-auto flex">
          <select aria-label="Rader per side" className="h-7 w-[66px] appearance-none border border-[#777] bg-white pl-1 text-[15px] text-black">
            <option>100</option>
          </select>
          <ChevronDown className="pointer-events-none absolute right-[2px] top-[6px] size-[17px] text-[#444f55]" strokeWidth={2.8} />
        </span>
        <span className="ml-[9px] whitespace-nowrap">rader per side</span>
        <span className="ml-[26px] whitespace-nowrap">Viser 1-14 av 14 linjer</span>
      </div>
      <span className="pointer-events-none absolute -left-[20px] bottom-0 h-11 w-[150px] border-8 border-[#e32027]" />
      <span className="pointer-events-none absolute bottom-0 left-[148px] h-11 w-[174px] border-8 border-[#e32027]" />
      <span className="pointer-events-none absolute bottom-0 right-0 h-14 w-[370px] border-8 border-[#e32027]" />
      <Badge n={7} className="-bottom-[7px] -left-[60px]" />
      <Badge n={8} className="-bottom-[5px] left-[288px]" />
      <Badge n={9} className="-bottom-[7px] right-[361px]" />
    </div>
  );
}

export default function App() {
  return (
    <div className="flex h-screen flex-col overflow-hidden bg-white pb-[5px] font-['Noto_Sans',sans-serif]">
      <div className="flex min-h-0 grow border-2 border-[#d9d9d9]">
        <Sidebar />
        <main className="flex min-w-0 grow flex-col">
          <section className="relative mt-px h-[430px] shrink-0 overflow-hidden">
            <MapView />
            <MapTools />
          </section>
          <PanelBar />
          <Toolbar />
          <DataTable />
          <Footer />
        </main>
      </div>
    </div>
  );
}
